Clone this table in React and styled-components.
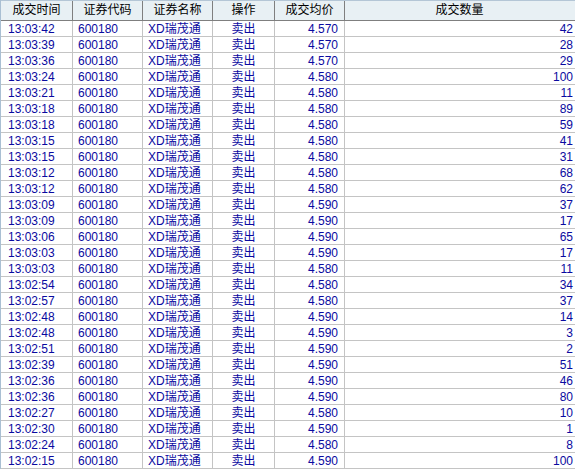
import React from 'react';
import styled, { createGlobalStyle } from 'styled-components';

const GlobalStyle = createGlobalStyle`
  html, body {
    margin: 0;
    padding: 0;
    background: #ffffff;
  }
  body {
    font-family: 'Liberation Sans', 'Noto Sans CJK SC', sans-serif;
    font-size: 12px;
  }
`;

const COLUMNS = '72px 70px 70px 62px 70px 1fr';

const Table = styled.div`
  width: 575px;
  height: 469px;
  overflow: hidden;
  border-left: 1px solid #a9bfd3;
  box-sizing: border-box;
`;

const HeaderRow = styled.div`
  display: grid;
  grid-template-columns: ${COLUMNS};
  height: 21px;
  box-sizing: border-box;
  background: #e8f0f4;
  border-top: 1px solid #b4c6d6;
  border-bottom: 1px solid #7f7f7f;
`;

const HeaderCell = styled.div`
  display: flex;
  align-items: center;
  justify-content: center;
  color: #000;
  font-size: 12px;
  line-height: 19px;
  border-right: 1px solid ${({ $last }) => ($last ? 'transparent' : '#7f7f7f')};
  white-space: nowrap;
  overflow: hidden;
`;

const Row = styled.div`
  display: grid;
  grid-template-columns: ${COLUMNS};
  height: 16px;
  box-sizing: border-box;
  border-bottom: 1px solid #c4c4c4;
`;

const Cell = styled.div`
  display: flex;
  align-items: center;
  justify-content: ${({ $align }) =>
    $align === 'right' ? 'flex-end' : $align === 'center' ? 'center' : 'flex-start'};
  padding: ${({ $pad }) => $pad || '1px 0 0 5px'};
  color: #0a0aa0;
  font-size: 12px;
  line-height: 14px;
  border-right: 1px solid ${({ $last }) => ($last ? 'transparent' : '#c4c4c4')};
  white-space: nowrap;
  overflow: hidden;
`;

const headers = ['成交时间', '证券代码', '证券名称', '操作', '成交均价', '成交数量'];

const trades = [
  ['13:03:42', '4.570', 42],
  ['13:03:39', '4.570', 28],
  ['13:03:36', '4.570', 29],
  ['13:03:24', '4.580', 100],
  ['13:03:21', '4.580', 11],
  ['13:03:18', '4.580', 89],
  ['13:03:18', '4.580', 59],
  ['13:03:15', '4.580', 41],
  ['13:03:15', '4.580', 31],
  ['13:03:12', '4.580', 68],
  ['13:03:12', '4.580', 62],
  ['13:03:09', '4.590', 37],
  ['13:03:09', '4.590', 17],
  ['13:03:06', '4.590', 65],
  ['13:03:03', '4.590', 17],
  ['13:03:03', '4.580', 11],
  ['13:02:54', '4.580', 34],
  ['13:02:57', '4.580', 37],
  ['13:02:48', '4.590', 14],
  ['13:02:48', '4.590', 3],
  ['13:02:51', '4.590', 2],
  ['13:02:39', '4.590', 51],
  ['13:02:36', '4.590', 46],
  ['13:02:36', '4.590', 80],
  ['13:02:27', '4.580', 10],
  ['13:02:30', '4.590', 1],
  ['13:02:24', '4.580', 8],
  ['13:02:15', '4.590', 100],
];

export default function App() {
  return (
    <>
      <GlobalStyle />
      <Table>
        <HeaderRow>
          {headers.map((h, i) => (
            <HeaderCell key={h} $last={i === headers.length - 1}>
              {h}
            </HeaderCell>
          ))}
        </HeaderRow>
        {trades.map(([time, price, qty], i) => (
          <Row key={i}>
            <Cell $pad="1px 0 0 7px">{time}</Cell>
            <Cell>600180</Cell>
            <Cell>XD瑞茂通</Cell>
            <Cell $align="center" $pad="1px 0 0 0">卖出</Cell>
            <Cell $align="right" $pad="1px 6px 0 0">{price}</Cell>
            <Cell $align="right" $pad="1px 1px 0 0" $last>{qty}</Cell>
          </Row>
        ))}
      </Table>
    </>
  );
}
